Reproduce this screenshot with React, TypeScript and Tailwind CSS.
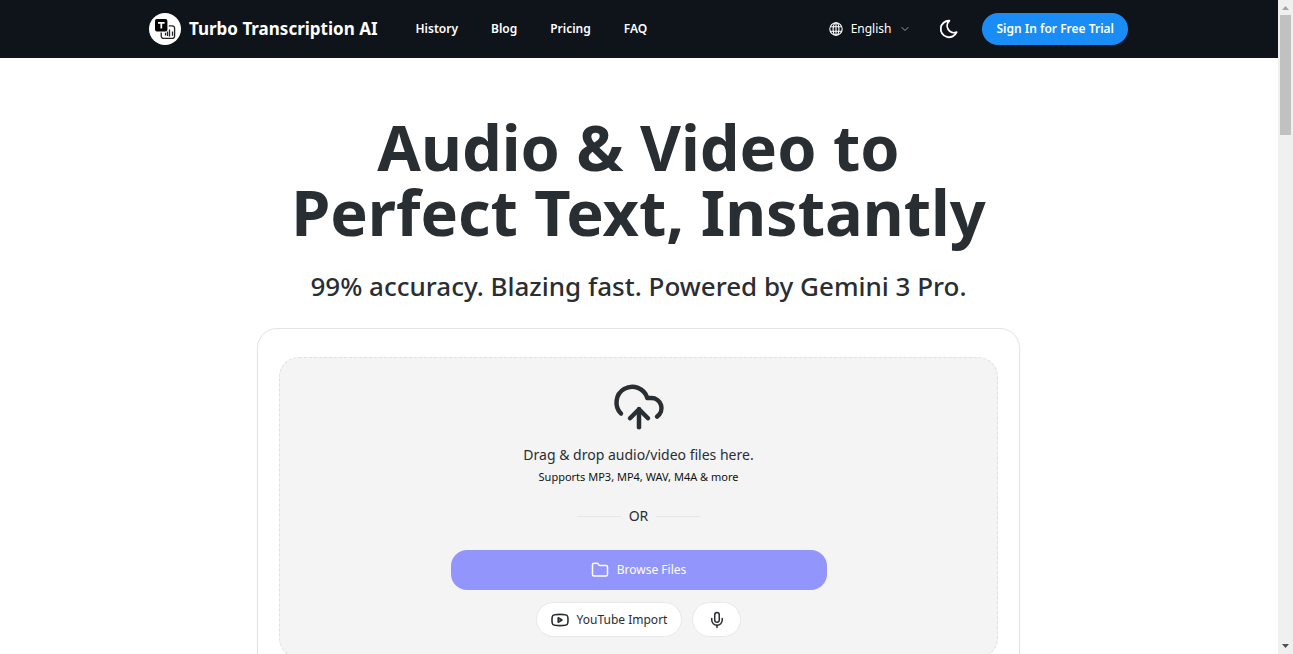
import React from "react";
import { ChevronDown, CloudUpload, Folder, Mic } from "lucide-react";

const navLinks = ["History", "Blog", "Pricing", "FAQ"];

function Logo() {
  return (
    <svg viewBox="0 0 32 32" className="size-8 shrink-0" aria-hidden="true">
      <circle cx="16" cy="16" r="16" fill="#fff" />
      <path d="M12.2 19.6v3.4a2.4 2.4 0 0 0 2.4 2.4h8.6a2.4 2.4 0 0 0 2.4-2.4v-7.8a2.4 2.4 0 0 0-2.4-2.4h-3.4" fill="none" stroke="#222" strokeWidth="1.3" />
      <rect x="6" y="6" width="12.4" height="12.4" rx="2" fill="#000" />
      <path d="M9 9.8h6.6M12.3 9.8v5.8" stroke="#fff" strokeWidth="1.8" fill="none" />
      <path d="M16.5 19.8v2.6M18.5 18.4v4.6M20.5 16.4v7M23.5 18.4v4.4" stroke="#222" strokeWidth="1.3" fill="none" />
    </svg>
  );
}

function GlobeIcon() {
  return (
    <svg viewBox="0 0 14 14" className="size-3.5" fill="none" stroke="currentColor" strokeWidth="1.1" aria-hidden="true">
      <circle cx="7" cy="7" r="6.2" />
      <ellipse cx="7" cy="7" rx="2.9" ry="6.2" />
      <path d="M7 .8v12.4M1.6 4.7h10.8M1.6 9.3h10.8" />
    </svg>
  );
}

function MoonIcon() {
  return (
    <svg viewBox="0 0 24 24" className="size-[22px]" fill="none" stroke="currentColor" strokeWidth="2" strokeLinecap="round" strokeLinejoin="round" aria-hidden="true">
      <path d="M12 3h.393a7.5 7.5 0 0 0 7.92 12.446A9 9 0 1 1 12 2.992z" />
    </svg>
  );
}

function VideoIcon() {
  return (
    <svg viewBox="0 0 18 14" className="h-3.5 w-[18px]" fill="none" stroke="currentColor" strokeWidth="1.6" strokeLinejoin="round" aria-hidden="true">
      <path d="M3.6 1.7Q9 1 14.4 1.7Q16.6 2 16.8 4Q17.2 7 16.8 10Q16.6 12 14.4 12.3Q9 13 3.6 12.3Q1.4 12 1.2 10Q.8 7 1.2 4Q1.4 2 3.6 1.7Z" />
      <path d="M7.2 4.8v4.4L11 7Z" fill="currentColor" fillOpacity="0.4" />
    </svg>
  );
}

function Header() {
  return (
    <header className="bg-[#0f131a] text-white">
      <div className="mx-auto flex h-[58px] max-w-[980px] items-center pr-px">
        <a href="#" className="flex items-center gap-2 text-[17px] font-bold whitespace-nowrap">
          <Logo />
          Turbo Transcription AI
        </a>
        <nav className="ml-[38px] flex gap-[33px] text-xs font-semibold">
          {navLinks.map((label) => (
            <a key={label} href="#">
              {label}
            </a>
          ))}
        </nav>
        <div className="ml-auto flex items-center">
          <button type="button" className="flex items-center gap-2 text-xs">
            <GlobeIcon />
            English
            <ChevronDown className="size-3 text-gray-400" strokeWidth={2} />
          </button>
          <button type="button" aria-label="Toggle dark mode" className="ml-[27px]">
            <MoonIcon />
          </button>
          <button type="button" className="ml-[22px] h-8 rounded-full bg-[#1a8cf5] px-3.5 text-xs font-semibold whitespace-nowrap">
            Sign In for Free Trial
          </button>
        </div>
      </div>
    </header>
  );
}

function UploadCard() {
  return (
    <section className="mt-6 w-full max-w-[763px] rounded-[20px] border border-[#e4e4e4] bg-white px-[21px] py-7 shadow-xs">
      <div className="flex flex-col items-center rounded-[20px] border border-dashed border-[#e0e0e0] bg-[#f4f4f4] px-5 pt-[22px] pb-5">
        <CloudUpload className="size-[54px]" strokeWidth={2} />
        <p className="mt-[9px] text-sm leading-6">Drag &amp; drop audio/video files here.</p>
        <p className="mt-0.5 text-[11px] leading-4 text-[#111]">Supports MP3, MP4, WAV, M4A &amp; more</p>
        <div className="mt-[19px] flex items-center gap-2 text-sm leading-6">
          <span className="h-px w-11 bg-[#e6e6e6]" />
          OR
          <span className="h-px w-11 bg-[#e6e6e6]" />
        </div>
        <button type="button" className="mt-[22px] flex h-10 w-full max-w-[376px] items-center justify-center gap-2 rounded-2xl bg-[#9295fc] text-xs text-white">
          <Folder className="size-[18px]" strokeWidth={2} />
          Browse Files
        </button>
        <div className="mt-3 flex items-center gap-2.5">
          <button type="button" className="flex h-[35px] items-center gap-2 rounded-full border border-[#e8e8e8] bg-white px-3.5 text-xs">
            <VideoIcon />
            YouTube Import
          </button>
          <button type="button" aria-label="Record audio" className="flex h-[35px] w-[49px] items-center justify-center rounded-full border border-[#e8e8e8] bg-white">
            <Mic className="size-[18px]" strokeWidth={2} />
          </button>
        </div>
      </div>
    </section>
  );
}

function ScrollTrack() {
  return (
    <div className="flex w-[15px] shrink-0 flex-col items-center bg-[#f0f0f0] py-1.5" aria-hidden="true">
      <svg viewBox="0 0 7 4" className="h-1 w-[7px]">
        <path d="M3.5 0L7 4H0Z" fill="#a3a3a3" />
      </svg>
      <div className="mt-[5px] h-[120px] w-[11px] bg-[#c1c1c1]" />
      <svg viewBox="0 0 7 4" className="mt-auto h-1 w-[7px]">
        <path d="M0 0H7L3.5 4Z" fill="#505050" />
      </svg>
    </div>
  );
}

export default function App() {
  return (
    <div className="flex h-screen overflow-hidden bg-white font-['Noto_Sans',sans-serif] text-[#292e33]">
      <div className="min-w-0 flex-1 overflow-hidden">
        <Header />
        <main className="flex flex-col items-center pt-14 pr-[17px] pl-4">
          <h1 className="text-center text-[63px] leading-[65px] font-bold">
            <span className="block">Audio &amp; Video to</span>
            <span className="block">Perfect Text, Instantly</span>
          </h1>
          <p className="mt-6 text-center text-[26px] leading-9 font-medium">
            99% accuracy. Blazing fast. Powered by Gemini 3 Pro.
          </p>
          <UploadCard />
        </main>
      </div>
      <ScrollTrack />
    </div>
  );
}
